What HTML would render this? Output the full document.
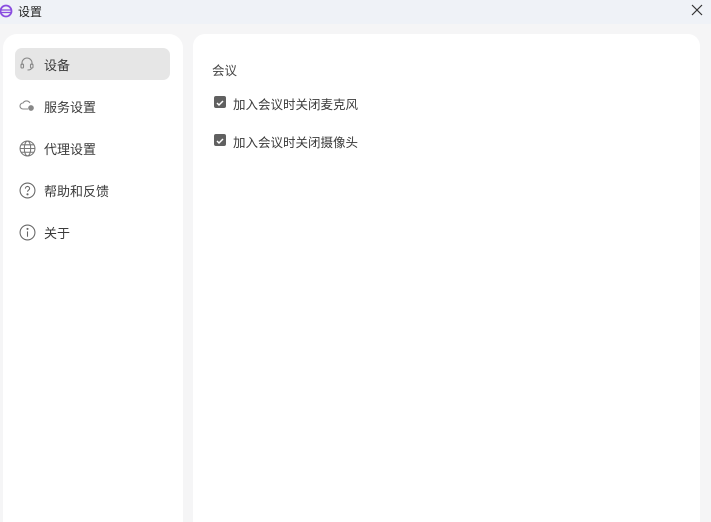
<!DOCTYPE html>
<html style="overflow:hidden;width:711px;height:522px"><head><meta charset="utf-8"><style>
*{margin:0;padding:0;box-sizing:border-box}
body{width:711px;height:522px;overflow:hidden;background:#f5f5f6;font-family:"Liberation Sans","Noto Sans CJK SC",sans-serif;position:relative}
.title{position:absolute;left:0;top:0;width:711px;height:24px;background:#eff2f7;font-size:12px;color:#222}
.title span{position:absolute;left:18px;top:3px}
.left{position:absolute;left:3px;top:34px;width:180px;height:488px;background:#fff;border-radius:14px 14px 0 0}
.right{position:absolute;left:193px;top:34px;width:507px;height:488px;background:#fff;border-radius:12px 12px 0 0}
.item{position:absolute;left:12px;width:155px;height:32px;border-radius:7px;font-size:13px;color:#3a3a3a}
.item.sel{background:#e6e6e6}
.item svg{position:absolute;left:4px;top:8px}
.item span{position:absolute;left:29px;top:7px}
.cb{position:absolute;left:21px;width:12px;height:12px;background:#606060;border-radius:2px}
.lbl{position:absolute;font-size:12.5px;color:#3a3a3a}
</style></head><body>
<div class="title">
<svg style="position:absolute;left:0;top:4px" width="14" height="14" viewBox="0 0 14 14"><circle cx="6" cy="7" r="5.5" fill="none" stroke="#8a4de0" stroke-width="1.8"/><path d="M1 6h10M1.5 8.5h9" stroke="#8a4de0" stroke-width="1.3"/></svg>
<span>设置</span>
<svg style="position:absolute;left:691px;top:4px" width="12" height="12" viewBox="0 0 12 12"><path d="M1 1L11 11M11 1L1 11" stroke="#333" stroke-width="1.2"/></svg>
</div>
<div class="left">
<div class="item sel" style="top:14px"><svg width="16" height="16" viewBox="0 0 16 16" fill="none" stroke="#888" stroke-width="1.1"><path d="M3 9V7a5 5 0 0110 0v2"/><rect x="2" y="8" width="2.5" height="4" rx="1"/><rect x="11.5" y="8" width="2.5" height="4" rx="1"/><path d="M12.5 12q0 2-4 2"/></svg><span>设备</span></div>
<div class="item" style="top:56px"><svg width="16" height="16" viewBox="0 0 16 16" fill="none" stroke="#888" stroke-width="1.1"><path d="M9 11H4a3 3 0 010-6 4 4 0 017 0"/><circle cx="12" cy="10" r="2.3" fill="#888"/></svg><span>服务设置</span></div>
<div class="item" style="top:98px"><svg width="17" height="17" viewBox="0 0 16 16" fill="none" stroke="#777" stroke-width="1"><circle cx="8" cy="8" r="7"/><ellipse cx="8" cy="8" rx="3" ry="7"/><path d="M1 8h14M2 4.5h12M2 11.5h12"/></svg><span>代理设置</span></div>
<div class="item" style="top:140px"><svg width="17" height="17" viewBox="0 0 16 16" fill="none" stroke="#666" stroke-width="1"><circle cx="8" cy="8" r="7"/><path d="M6 6.2a2 2 0 114 0c0 1.3-2 1.5-2 3"/><circle cx="8" cy="11.6" r=".5" fill="#666"/></svg><span>帮助和反馈</span></div>
<div class="item" style="top:182px"><svg width="17" height="17" viewBox="0 0 16 16" fill="none" stroke="#666" stroke-width="1"><circle cx="8" cy="8" r="7"/><path d="M8 7v5"/><circle cx="8" cy="4.6" r=".5" fill="#666"/></svg><span>关于</span></div>
</div>
<div class="right">
<div class="lbl" style="left:19px;top:26px;color:#444">会议</div>
<div class="cb" style="top:62px"><svg width="12" height="12" viewBox="0 0 12 12"><path d="M3 6l2 2 4-4" stroke="#fff" stroke-width="1.5" fill="none"/></svg></div>
<div class="lbl" style="left:40px;top:60px">加入会议时关闭麦克风</div>
<div class="cb" style="top:100px"><svg width="12" height="12" viewBox="0 0 12 12"><path d="M3 6l2 2 4-4" stroke="#fff" stroke-width="1.5" fill="none"/></svg></div>
<div class="lbl" style="left:40px;top:98px">加入会议时关闭摄像头</div>
</div>
</body></html>
